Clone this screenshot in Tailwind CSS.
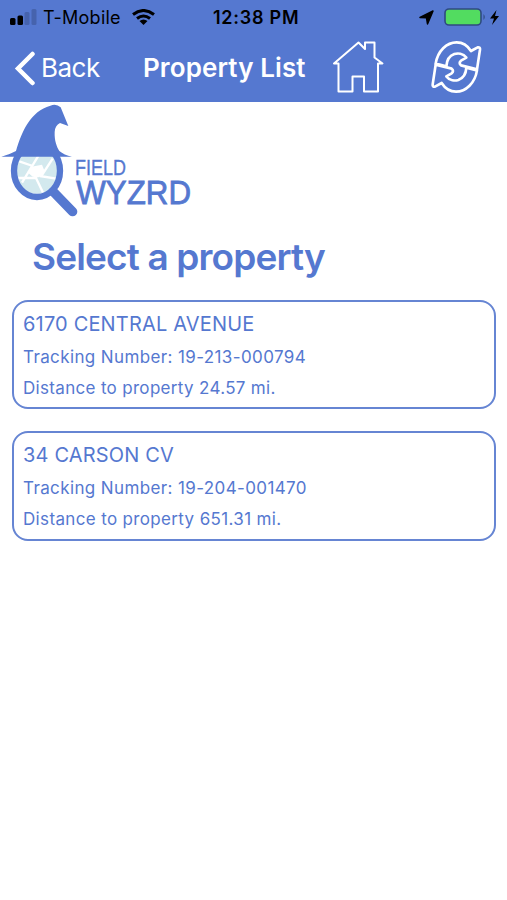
<!DOCTYPE html>
<html lang="en">
<head>
    <meta charset="UTF-8">
    <meta name="viewport" content="width=device-width, initial-scale=1.0">
    <title>Field Wyzrd - Property List</title>
    <script src="https://cdn.jsdelivr.net/npm/@tailwindcss/browser@4"></script>
</head>
<body class="min-h-screen bg-white font-['Inter',sans-serif] text-[#5578d0]">
    <!-- Header -->
    <header class="h-[102px] bg-[#5578d0]">
        <!-- Status Bar -->
        <div class="grid h-[34px] grid-cols-[213px_1fr_auto] items-center pl-2.5 pr-2 text-black">
            <div class="flex items-center">
                <svg class="h-4 w-[27px]" viewBox="0 0 27 16">
                    <rect x="0" y="9" width="5.5" height="7" rx="1.5"/>
                    <rect x="7.5" y="6.5" width="5.5" height="9.5" rx="1.5"/>
                    <g fill="#4663ad">
                        <rect x="14.5" y="3" width="5" height="13" rx="1.5"/>
                        <rect x="21.5" y="0" width="5" height="16" rx="1.5"/>
                    </g>
                </svg>
                <span class="ml-1.5 w-[78px] whitespace-nowrap pt-0.5 text-[18px] leading-6 tracking-[0.25px]">T-Mobile</span>
                <svg class="ml-[11px] h-4 w-[23px]" viewBox="0 0 23 16">
                    <g fill="none" stroke="#000" stroke-width="3">
                        <path d="M1 5.5Q11.5-2.5 22 5.5"/>
                        <path d="M5 9.5Q11.5 4.5 18 9.5"/>
                    </g>
                    <path d="M7.5 12Q11.5 9 15.5 12L11.5 16Z"/>
                </svg>
            </div>
            <span class="-ml-2.5 whitespace-nowrap pt-0.5 text-[18px] leading-6 font-semibold tracking-[0.75px]">12:38 PM</span>
            <div class="flex items-center">
                <svg class="h-[15px] w-[15px]" viewBox="0 0 15 15">
                    <path d="M14 1L8.5 14L7.5 7.8L1 7.5Z" stroke="#000" stroke-width="1.5" stroke-linejoin="round"/>
                </svg>
                <svg class="ml-2.5 h-[18px] w-[42px]" viewBox="0 0 42 18">
                    <rect x="1" y="1" width="36" height="16" rx="4" fill="#52dc60" stroke="#2f4a80" stroke-width="1.6"/>
                    <path d="M39.5 6Q42 9 39.5 12Z" fill="#2f4a80"/>
                </svg>
                <svg class="ml-1 h-[15px] w-[9px]" viewBox="0 0 9 15">
                    <path d="M6.5 0L0 8.5H4L2 15L9 6H5Z"/>
                </svg>
            </div>
        </div>

        <!-- Navigation Bar -->
        <div class="flex h-[68px] items-center text-white">
            <a href="#" class="flex w-[143px] items-center pl-3.5">
                <svg class="h-[35px] w-[21px]" viewBox="0 0 21 35">
                    <path d="M18.5 3L4 17.5L18.5 32" fill="none" stroke="#fff" stroke-width="4.5" stroke-linecap="round"/>
                </svg>
                <span class="ml-[6px] text-[26px] leading-8 tracking-[-0.5px]">Back</span>
            </a>
            <h1 class="w-[189px] whitespace-nowrap text-[26px] leading-8 font-semibold tracking-[0.1px]">Property List</h1>
            <button class="h-[54px] w-[54px]">
                <svg viewBox="0 0 54 54" fill="none" stroke="#fff" stroke-width="2" stroke-linejoin="round">
                    <path d="M6.5 50.500V22.500H2L26.500 1.500L33 8V1.500H42.500V16.500L50.500 22.500H46V50.500H32V35.500H20.500V50.500Z"/>
                </svg>
            </button>
            <button class="-mt-0.5 ml-[39px] h-[65px] w-[65px]">
                <svg viewBox="0 0 195 195" fill="none" stroke="#fff" stroke-width="8" stroke-linejoin="round">
                    <path id="arrow" d="M32 86C38 48 65 22 95 22C112 22 128 32 138 48L158 37Q166 36 165 44L156 103L108 91Q100 84 108 77L124 68C114 55 98 54 88 57C74 62 65 76 64 94Z"/>
                    <use href="#arrow" transform="rotate(180 94 96)"/>
                </svg>
            </button>
        </div>
    </header>

    <main>
        <!-- Logo -->
        <svg class="h-[118px] w-[200px]" viewBox="0 6 600 354" fill="#5578d0">
            <circle cx="111" cy="213" r="68" fill="#d3e9ee"/>
            <path d="M94 200L126 194L134 214L118 232L98 230L86 220Z" fill="#fff"/>
            <path d="M58 184L98 198M116 166L66 248M48 234H112M104 226L130 280M120 228L168 236M158 176L124 228" fill="none" stroke="#fff" stroke-width="7"/>
            <ellipse cx="111" cy="212" rx="69" ry="79" fill="none" stroke="#5578d0" stroke-width="19"/>
            <path d="M160 275L218 335" stroke="#5578d0" stroke-width="28" stroke-linecap="round"/>
            <path d="M4 170Q28 164 48 153C66 92 92 34 151 17Q169 10 182 22L205 78L180 69Q165 76 164 96C163 122 170 140 178 153Q192 165 216 170Z"/>
            <g font-family="Liberation Sans, sans-serif" stroke="#5578d0">
                <text x="225" y="225" font-size="67" textLength="153" lengthAdjust="spacingAndGlyphs" stroke-width="1">FIELD</text>
                <text x="229" y="312" font-size="102" textLength="344" lengthAdjust="spacingAndGlyphs" stroke-width="2.500">WYZRD</text>
            </g>
        </svg>

        <h2 class="mt-3.5 pl-8 text-[37px] leading-[46px] font-semibold tracking-[-0.85px] whitespace-nowrap">Select a property</h2>

        <!-- Property List -->
        <div class="mt-5 flex flex-col gap-[22px] pl-3 pr-[11px]">
            <div class="h-[109px] rounded-[16px] border-2 border-[#6685d3] px-[9px] pt-[7px]">
                <h3 class="text-[20px] leading-[30px] tracking-[0.17px]">6170 CENTRAL AVENUE</h3>
                <p class="mt-[3px] text-[17px] leading-[31px] tracking-[0.38px]">Tracking Number: 19-213-000794</p>
                <p class="text-[17px] leading-[31px] tracking-[0.32px]">Distance to property 24.57 mi.</p>
            </div>
            <div class="h-[110px] rounded-[16px] border-2 border-[#6685d3] px-[9px] pt-[7px]">
                <h3 class="text-[20px] leading-[30px] tracking-[0.17px]">34 CARSON CV</h3>
                <p class="mt-[3px] text-[17px] leading-[31px] tracking-[0.38px]">Tracking Number: 19-204-001470</p>
                <p class="text-[17px] leading-[31px] tracking-[0.35px]">Distance to property 651.31 mi.</p>
            </div>
        </div>
    </main>
</body>
</html>
